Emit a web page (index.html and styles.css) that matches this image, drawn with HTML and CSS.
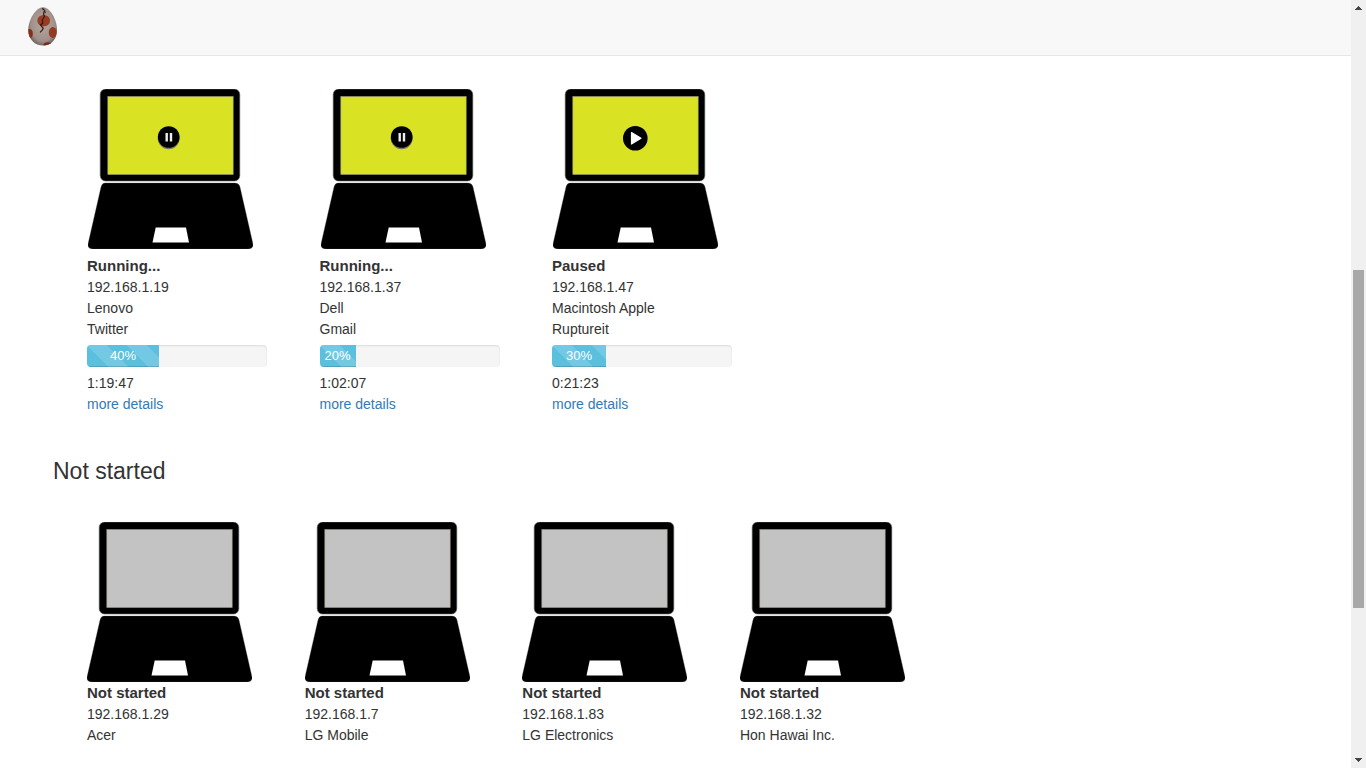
FILE: index.html
```html
<!DOCTYPE html>
<html lang="en">
<head>
<meta charset="utf-8">
<title>Machines</title>
<link rel="stylesheet" href="styles.css">
</head>
<body>
<svg class="defs" aria-hidden="true">
  <symbol id="laptop" viewBox="0 0 165 160">
    <rect x="12.200" y="0" width="139.600" height="92" rx="5.500" fill="#000" stroke="#5b6462" stroke-width=".6"/>
    <rect x="19.800" y="7.400" width="125.400" height="78.200" fill="currentColor" stroke="#8d8d80" stroke-width=".6"/>
    <path d="M17 94H147Q151 94 152 98L165 155Q165.500 160 160 160H5Q-.5 160 0 155L13 98Q14 94 17 94Z" fill="#000" stroke="#555" stroke-width=".3"/>
    <path d="M67.700 138.500H98L101 153.500H64.500Z" fill="#fff"/>
  </symbol>
</svg>
<div class="app">
  <div class="page">
    <header class="navbar">
      <a class="brand" href="#" aria-label="Home">
        <svg class="egg" viewBox="0 0 30 40" aria-hidden="true">
          <defs>
            <radialGradient id="shell" cx=".5" cy=".45" r=".62">
              <stop offset="0" stop-color="#b5a69d"/><stop offset=".65" stop-color="#a09089"/><stop offset="1" stop-color="#4b403c"/>
            </radialGradient>
            <clipPath id="eggshape"><path d="M15 .3C22 .3 29 12.500 29 23C29 32.500 23 38.600 15 38.600C7 38.600 .3 32.500 .3 23C.3 12.500 8 .3 15 .3Z"/></clipPath>
          </defs>
          <g clip-path="url(#eggshape)">
            <rect width="30" height="40" fill="url(#shell)"/>
            <ellipse cx="15.700" cy="13.700" rx="6.400" ry="5.800" fill="#963d24"/>
            <ellipse cx="24.800" cy="25.500" rx="4" ry="5.400" fill="#943a22"/>
            <ellipse cx="1.500" cy="26.500" rx="3.300" ry="4.500" fill="#843019"/>
            <ellipse cx="20" cy="37.800" rx="4.500" ry="2.500" fill="#7b2a17"/>
            <path d="M14.500 1L16.500 3.500L15.500 7L16.500 9.500L14.300 13L14.800 16L12.500 18L15.300 21.300L14 23.500L12 25.300" fill="none" stroke="#2b1512" stroke-width="1.100"/>
            <path d="M14 1.800L16.500 3L17.500 6" fill="none" stroke="#392320" stroke-width="1"/>
          </g>
        </svg>
      </a>
    </header>
    <main class="content">
      <section class="machines active" aria-label="In progress">
        <article class="machine">
          <svg class="laptop on" viewBox="0 0 165 160" role="img" aria-label="Running laptop">
            <use href="#laptop"/>
            <circle cx="80.700" cy="49.300" r="11" fill="#77766a"/><circle cx="80.700" cy="48" r="10.800" fill="#000"/>
            <path d="M78.700 44V52.500M83 44V52.500" stroke="#eee" stroke-width="2.400"/>
          </svg>
          <strong>Running...</strong><span>192.168.1.19</span><span>Lenovo</span><span>Twitter</span>
          <div class="progress" role="progressbar" aria-label="Progress" aria-valuenow="40" aria-valuemin="0" aria-valuemax="100"><div class="bar" style="width:40%">40%</div></div>
          <span>1:19:47</span><a href="#">more details</a>
        </article>
        <article class="machine">
          <svg class="laptop on" viewBox="0 0 165 160" role="img" aria-label="Running laptop">
            <use href="#laptop"/>
            <circle cx="80.700" cy="49.300" r="11" fill="#77766a"/><circle cx="80.700" cy="48" r="10.800" fill="#000"/>
            <path d="M78.700 44V52.500M83 44V52.500" stroke="#eee" stroke-width="2.400"/>
          </svg>
          <strong>Running...</strong><span>192.168.1.37</span><span>Dell</span><span>Gmail</span>
          <div class="progress" role="progressbar" aria-label="Progress" aria-valuenow="20" aria-valuemin="0" aria-valuemax="100"><div class="bar" style="width:20%">20%</div></div>
          <span>1:02:07</span><a href="#">more details</a>
        </article>
        <article class="machine">
          <svg class="laptop on" viewBox="0 0 165 160" role="img" aria-label="Paused laptop">
            <use href="#laptop"/>
            <circle cx="82.300" cy="49.300" r="12.300" fill="#000"/>
            <path d="M78.500 43.500L88 49.200L78.500 55Z" fill="#fff" stroke="#fff" stroke-width="1.200" stroke-linejoin="round"/>
          </svg>
          <strong>Paused</strong><span>192.168.1.47</span><span>Macintosh Apple</span><span>Ruptureit</span>
          <div class="progress" role="progressbar" aria-label="Progress" aria-valuenow="30" aria-valuemin="0" aria-valuemax="100"><div class="bar" style="width:30%">30%</div></div>
          <span>0:21:23</span><a href="#">more details</a>
        </article>
      </section>
      <h2>Not started</h2>
      <section class="machines idle" aria-label="Not started">
        <article class="machine">
          <svg class="laptop off" viewBox="0 0 165 160" role="img" aria-label="Idle laptop"><use href="#laptop"/></svg>
          <strong>Not started</strong><span>192.168.1.29</span><span>Acer</span>
        </article>
        <article class="machine">
          <svg class="laptop off" viewBox="0 0 165 160" role="img" aria-label="Idle laptop"><use href="#laptop"/></svg>
          <strong>Not started</strong><span>192.168.1.7</span><span>LG Mobile</span>
        </article>
        <article class="machine">
          <svg class="laptop off" viewBox="0 0 165 160" role="img" aria-label="Idle laptop"><use href="#laptop"/></svg>
          <strong>Not started</strong><span>192.168.1.83</span><span>LG Electronics</span>
        </article>
        <article class="machine">
          <svg class="laptop off" viewBox="0 0 165 160" role="img" aria-label="Idle laptop"><use href="#laptop"/></svg>
          <strong>Not started</strong><span>192.168.1.32</span><span>Hon Hawai Inc.</span>
        </article>
      </section>
    </main>
  </div>
  <div class="scrollbar" aria-hidden="true">
    <svg class="arrow" viewBox="0 0 7 4"><path d="M3 0H4V1H5V2H6V3H7V4H0V3H1V2H2V1H3Z"/></svg>
    <div class="track"><div class="thumb"></div></div>
    <svg class="arrow" viewBox="0 0 7 4"><path d="M0 0H7V1H6V2H5V3H4V4H3V3H2V2H1V1H0Z"/></svg>
  </div>
</div>
</body>
</html>
```

FILE: styles.css
```css
* { box-sizing: border-box; }
body {
  margin: 0;
  background: #fff;
  color: #333;
  font: 14px/21px "Liberation Sans", Arial, sans-serif;
}
.defs { display: none; }
.app { display: grid; grid-template-columns: 1fr 15px; min-height: 100vh; }
.navbar {
  display: flex;
  padding: 7px 28px 8px;
  background: #f8f8f8;
  border-bottom: 1px solid #e7e7e7;
}
.brand { display: block; }
.egg { display: block; width: 30px; height: 40px; }
.content { padding: 33px 53px 0; }
.machines { display: grid; justify-content: space-between; padding-left: 34px; }
.active { grid-template-columns: repeat(3, 180px); max-width: 679px; }
.idle { grid-template-columns: repeat(4, 165px); max-width: 852px; }
.machine { display: flex; flex-direction: column; align-items: flex-start; }
.machine strong { padding-bottom: 1px; font-size: 15px; }
.laptop { display: block; width: 165px; height: 160px; }
.active .laptop { margin: 0 1px 6px; }
.on { color: #d9e324; }
.off { color: #c3c3c3; }
.progress {
  width: 100%;
  height: 22px;
  margin: 5px 0 6px;
  overflow: hidden;
  background: #f5f5f5;
  border-radius: 4px;
  box-shadow: inset 0 1px 2px rgba(0, 0, 0, .1);
}
.bar {
  height: 100%;
  color: #fff;
  font-size: 13px;
  line-height: 22px;
  text-align: center;
  background-color: #5bc0de;
  background-image: linear-gradient(45deg, rgba(255, 255, 255, .15) 25%, transparent 25%, transparent 50%, rgba(255, 255, 255, .15) 50%, rgba(255, 255, 255, .15) 75%, transparent 75%, transparent);
  background-size: 40px 40px;
  box-shadow: inset 0 -1px 0 rgba(0, 0, 0, .15);
}
a { color: #337ab7; text-decoration: none; }
h2 { margin: 43px 0 38px; font-size: 23px; line-height: 26px; font-weight: 400; }
.scrollbar {
  display: flex;
  flex-direction: column;
  align-items: center;
  padding: 6px 0;
  background: #f0f0f0;
}
.arrow { width: 7px; height: 4px; fill: #444; }
.track { flex: 1; align-self: stretch; padding: 260px 2px 0; }
.thumb { height: 338px; background: #a8a8a8; }
```
